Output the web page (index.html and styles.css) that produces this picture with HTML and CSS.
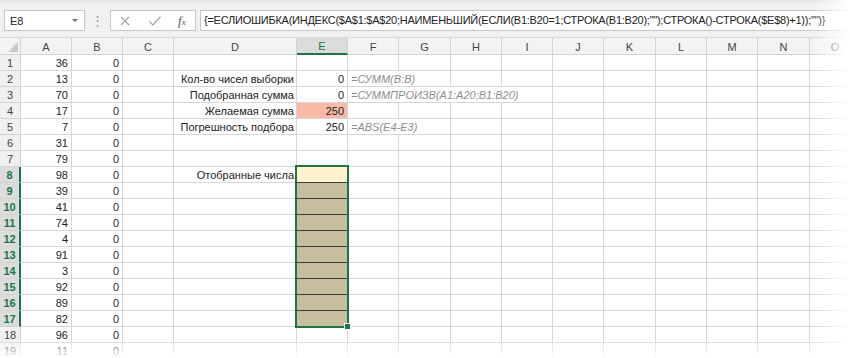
FILE: index.html
```html
<!DOCTYPE html>
<html lang="ru">
<head>
  <meta charset="UTF-8">
  <title>Подбор чисел под заданную сумму</title>
  <link rel="stylesheet" href="styles.css">
</head>
<body>
<div class="app">
  <div class="formula-bar">
    <div class="name-box"><span>E8</span><span class="caret"></span></div>
    <div class="grip">⋮</div>
    <div class="fx-buttons">
      <svg class="btn" width="12" height="12" viewBox="0 0 12 12"><path d="M2 2 L10 10 M10 2 L2 10" stroke="#a6a6a6" stroke-width="1.2" fill="none"/></svg>
      <svg class="btn" width="14" height="12" viewBox="0 0 14 12"><path d="M1.5 6.5 L5 10 L12.5 1.5" stroke="#a6a6a6" stroke-width="1.3" fill="none"/></svg>
      <span class="fx">f<span class="fx-x">x</span></span>
    </div>
    <div class="formula">{=ЕСЛИОШИБКА(ИНДЕКС($A$1:$A$20;НАИМЕНЬШИЙ(ЕСЛИ(B1:B20=1;СТРОКА(B1:B20);"");СТРОКА()-СТРОКА($E$8)+1));"")}</div>
  </div>

  <div class="sheet">
    <table class="grid">
      <colgroup>
        <col class="c-head">
        <col class="c-std"><col class="c-std"><col class="c-std">
        <col class="c-wide">
        <col class="c-std">
        <col class="c-std"><col class="c-big"><col class="c-std"><col class="c-std"><col class="c-std">
        <col class="c-big"><col class="c-std"><col class="c-std"><col class="c-big"><col class="c-std">
      </colgroup>
      <thead>
        <tr><th class="corner"><span class="corner-mark"></span></th><th>A</th><th>B</th><th>C</th><th>D</th><th class="active">E</th><th>F</th><th>G</th><th>H</th><th>I</th><th>J</th><th>K</th><th>L</th><th>M</th><th>N</th><th>O</th></tr>
      </thead>
      <tbody>
        <tr><th>1</th><td class="num">36</td><td class="num">0</td><td></td><td></td><td></td><td></td><td></td><td></td><td></td><td></td><td></td><td></td><td></td><td></td><td></td></tr>
        <tr><th>2</th><td class="num">13</td><td class="num">0</td><td></td><td class="label">Кол-во чисел выборки</td><td class="num">0</td><td class="note" colspan="2">=СУММ(B:B)</td><td></td><td></td><td></td><td></td><td></td><td></td><td></td><td></td></tr>
        <tr><th>3</th><td class="num">70</td><td class="num">0</td><td></td><td class="label">Подобранная сумма</td><td class="num">0</td><td class="note" colspan="4">=СУММПРОИЗВ(A1:A20;B1:B20)</td><td></td><td></td><td></td><td></td><td></td><td></td></tr>
        <tr><th>4</th><td class="num">17</td><td class="num">0</td><td></td><td class="label">Желаемая сумма</td><td class="num target">250</td><td></td><td></td><td></td><td></td><td></td><td></td><td></td><td></td><td></td><td></td></tr>
        <tr><th>5</th><td class="num">7</td><td class="num">0</td><td></td><td class="label">Погрешность подбора</td><td class="num">250</td><td class="note" colspan="2">=ABS(E4-E3)</td><td></td><td></td><td></td><td></td><td></td><td></td><td></td><td></td></tr>
        <tr><th>6</th><td class="num">31</td><td class="num">0</td><td></td><td></td><td></td><td></td><td></td><td></td><td></td><td></td><td></td><td></td><td></td><td></td><td></td></tr>
        <tr><th>7</th><td class="num">79</td><td class="num">0</td><td></td><td></td><td></td><td></td><td></td><td></td><td></td><td></td><td></td><td></td><td></td><td></td><td></td></tr>
        <tr><th class="active">8</th><td class="num">98</td><td class="num">0</td><td></td><td class="label">Отобранные числа</td><td class="out first"></td><td></td><td></td><td></td><td></td><td></td><td></td><td></td><td></td><td></td><td></td></tr>
        <tr><th class="active">9</th><td class="num">39</td><td class="num">0</td><td></td><td></td><td class="out"></td><td></td><td></td><td></td><td></td><td></td><td></td><td></td><td></td><td></td><td></td></tr>
        <tr><th class="active">10</th><td class="num">41</td><td class="num">0</td><td></td><td></td><td class="out"></td><td></td><td></td><td></td><td></td><td></td><td></td><td></td><td></td><td></td><td></td></tr>
        <tr><th class="active">11</th><td class="num">74</td><td class="num">0</td><td></td><td></td><td class="out"></td><td></td><td></td><td></td><td></td><td></td><td></td><td></td><td></td><td></td><td></td></tr>
        <tr><th class="active">12</th><td class="num">4</td><td class="num">0</td><td></td><td></td><td class="out"></td><td></td><td></td><td></td><td></td><td></td><td></td><td></td><td></td><td></td><td></td></tr>
        <tr><th class="active">13</th><td class="num">91</td><td class="num">0</td><td></td><td></td><td class="out"></td><td></td><td></td><td></td><td></td><td></td><td></td><td></td><td></td><td></td><td></td></tr>
        <tr><th class="active">14</th><td class="num">3</td><td class="num">0</td><td></td><td></td><td class="out"></td><td></td><td></td><td></td><td></td><td></td><td></td><td></td><td></td><td></td><td></td></tr>
        <tr><th class="active">15</th><td class="num">92</td><td class="num">0</td><td></td><td></td><td class="out"></td><td></td><td></td><td></td><td></td><td></td><td></td><td></td><td></td><td></td><td></td></tr>
        <tr><th class="active">16</th><td class="num">89</td><td class="num">0</td><td></td><td></td><td class="out"></td><td></td><td></td><td></td><td></td><td></td><td></td><td></td><td></td><td></td><td></td></tr>
        <tr><th class="active">17</th><td class="num">82</td><td class="num">0</td><td></td><td></td><td class="out last"></td><td></td><td></td><td></td><td></td><td></td><td></td><td></td><td></td><td></td><td></td></tr>
        <tr><th>18</th><td class="num">96</td><td class="num">0</td><td></td><td></td><td></td><td></td><td></td><td></td><td></td><td></td><td></td><td></td><td></td><td></td><td></td></tr>
        <tr><th>19</th><td class="num">11</td><td class="num">0</td><td></td><td></td><td></td><td></td><td></td><td></td><td></td><td></td><td></td><td></td><td></td><td></td><td></td></tr>
      </tbody>
    </table>
    <div class="selection"><span class="handle"></span></div>
  </div>

  <div class="fade"></div>
</div>
</body>
</html>
```

FILE: styles.css
```css
body { margin: 0; background: #fff; font-family: "Liberation Sans", Arial, sans-serif; color: #222; }
.app { position: relative; width: 850px; height: 358px; overflow: hidden; }

/* formula bar */
.formula-bar { height: 38px; box-sizing: border-box; padding-top: 10px; display: flex; align-items: flex-start; background: linear-gradient(#e4e4e4, #f1f1f1 4px, #f1f1f1); border-bottom: 1px solid #dadada; }
.name-box { margin-left: 4px; width: 81px; height: 21px; box-sizing: border-box; background: #fff; border: 1px solid #c6c6c6; display: flex; align-items: center; justify-content: space-between; padding: 0 6px 0 5px; font-size: 11px; }
.caret { width: 0; height: 0; border-left: 3px solid transparent; border-right: 3px solid transparent; border-top: 3px solid #6a6a6a; }
.grip { width: 25px; text-align: center; color: #9a9a9a; font-size: 13px; line-height: 21px; }
.fx-buttons { width: 86px; height: 21px; box-sizing: border-box; background: #fff; border: 1px solid #c6c6c6; display: flex; align-items: center; padding-left: 8px; }
.btn { display: block; margin-right: 17px; }
.fx { font-family: "Liberation Serif", serif; font-style: italic; font-size: 13px; color: #555; margin-left: -1px; }
.fx-x { font-size: 9px; }
.formula { flex: 1; margin-left: 4px; height: 21px; box-sizing: border-box; background: #fff; border: 1px solid #c6c6c6; border-right: none; padding-left: 3px; font-size: 11px; letter-spacing: -0.25px; line-height: 19px; white-space: nowrap; overflow: hidden; color: #222; }

/* sheet */
.sheet { position: relative; }
.grid { border-collapse: separate; border-spacing: 0; table-layout: fixed; width: 859px; font-size: 11px; }
.c-head { width: 21px; }
.c-std { width: 51px; }
.c-big { width: 52px; }
.c-wide { width: 123px; }
.grid th, .grid td { box-sizing: border-box; height: 16px; padding: 1px 3px 0; line-height: 14px; border-right: 1px solid #d6d6d6; border-bottom: 1px solid #d6d6d6; white-space: nowrap; overflow: hidden; }
.grid thead th { height: 17px; background: #f3f3f3; color: #444; font-weight: normal; text-align: center; border-color: #d3d3d3; }
.grid thead th.active { background: #dcdcdc; color: #217346; border-bottom: 2px solid #217346; }
.grid tbody th { background: #f0f0f0; color: #444; font-weight: normal; text-align: center; padding: 1px 0 0; border-color: #d3d3d3; }
.grid tbody th.active { background: #dcdcdc; color: #217346; font-weight: bold; border-right: 2px solid #217346; }
.corner { padding: 0 !important; vertical-align: bottom; }
.corner-mark { display: block; width: 0; height: 0; margin: 0 2px 2px auto; border-left: 10px solid transparent; border-bottom: 10px solid #c9c9c9; }

.num { text-align: right; }
.label { text-align: right; padding-right: 2px !important; }
.note { color: #8e8e8e; font-style: italic; overflow: visible; }
.target { background: #f9b9a7; }
.out { background: #c6be9e; border-bottom-color: #3c3c3c !important; }
.out.first { background: #fff2cc; }

.selection { position: absolute; left: 295px; top: 127px; width: 54px; height: 163px; box-sizing: border-box; border: 2px solid #217346; pointer-events: none; }
.handle { position: absolute; right: -4px; bottom: -4px; width: 5px; height: 5px; background: #217346; border: 1px solid #fff; }

/* soft edges of the screenshot */
.fade { position: absolute; inset: 0; pointer-events: none; background: linear-gradient(to right, rgba(255,255,255,0) 812px, #fff 850px), linear-gradient(to bottom, rgba(255,255,255,0) 338px, #fff 358px); }
```
